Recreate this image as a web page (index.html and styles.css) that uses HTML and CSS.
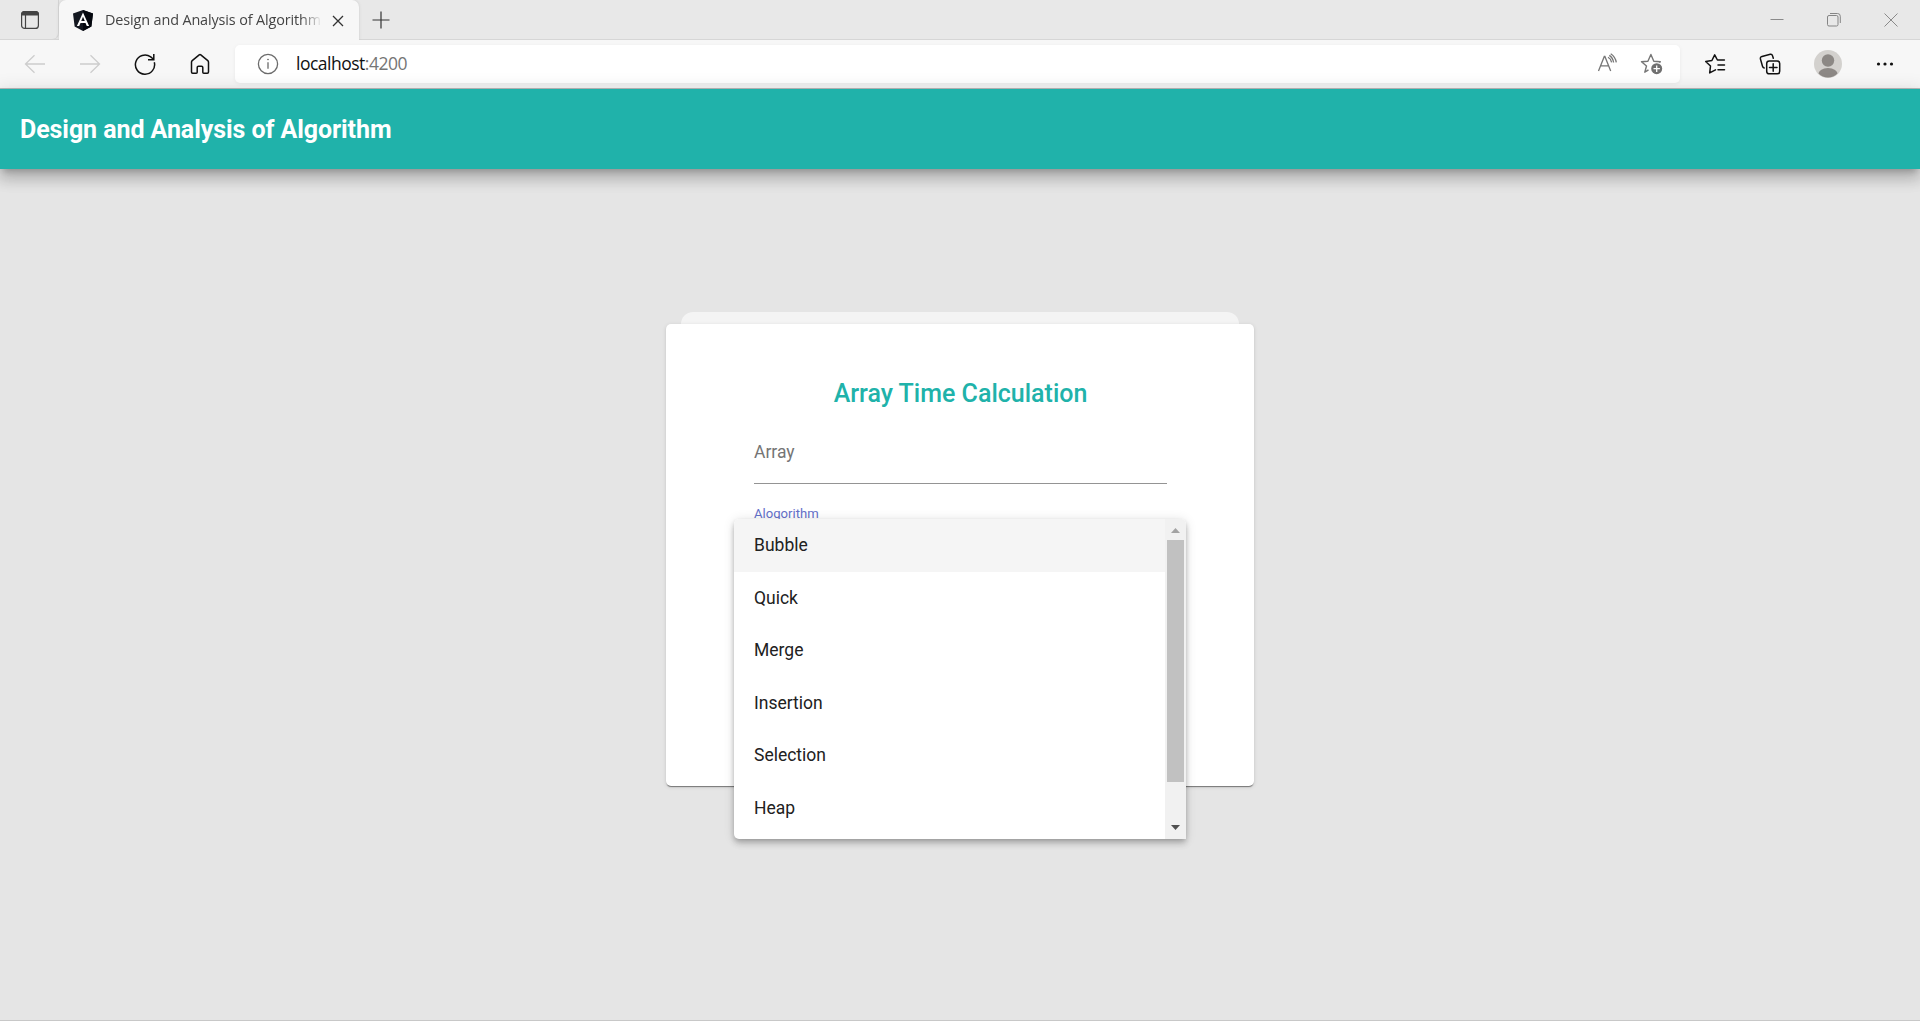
FILE: index.html
```html
<!DOCTYPE html>
<html lang="en">
<head>
<meta charset="utf-8">
<title>Design and Analysis of Algorithm</title>
<link rel="stylesheet" href="styles.css">
</head>
<body>
<div class="window">
  <div class="tab-strip">
    <div class="tab-actions">
      <svg width="20" height="20" viewBox="0 0 20 20" fill="none" stroke="#444"><rect x="1.6" y="1.6" width="16.8" height="16.8" rx="3" stroke-width="1.2"/><path d="M1.5 5V4a2.5 2.5 0 0 1 2.500-2.500h12a2.500 2.500 0 0 1 2.500 2.500v1z" fill="#444"/><path d="M5.500 5v13" stroke-width="1.200"/></svg>
    </div>
    <div class="tab">
      <svg class="favicon" width="20" height="21" viewBox="0 0 20 21"><path d="M10 0l10 3.400-1.600 13.200L10 21l-8.400-4.400L0 3.400z" fill="#141821"/><path d="M10 0l10 3.400-1.600 13.200L10 21z" fill="#05080f"/><path d="M10 2.400L3.900 16h2.300l1.300-3.100h5L13.800 16h2.300zm0 4.300l1.800 4.300H8.200z" fill="#fff"/></svg>
      <span class="tab-title">Design and Analysis of Algorithm</span>
      <svg class="tab-close" width="12" height="12" viewBox="0 0 12 12" stroke="#333" stroke-width="1.300"><path d="M1 1l10 10M11 1L1 11"/></svg>
    </div>
    <svg class="new-tab" width="18" height="18" viewBox="0 0 18 18" stroke="#333" stroke-width="1.200"><path d="M9 .5v17M.5 9h17"/></svg>
    <div class="window-buttons">
      <svg width="14" height="14" viewBox="0 0 14 14" stroke="#8a8a8a"><path d="M.5 6.500h13"/></svg>
      <svg width="14" height="14" viewBox="0 0 14 14" fill="none" stroke="#858585"><rect x=".5" y="2.500" width="10.500" height="10.500" rx="1.500"/><path d="M3 .5h7.500a2.800 2.800 0 0 1 2.800 2.800V10"/></svg>
      <svg width="14" height="14" viewBox="0 0 14 14" stroke="#8a8a8a"><path d="M.5 .5l13 13M13.500 .5l-13 13"/></svg>
    </div>
  </div>
  <div class="toolbar">
    <div class="nav">
      <svg width="22" height="22" viewBox="0 0 22 22" fill="none" stroke="#cdcdcd" stroke-width="1.300"><path d="M21 11H1.500M10.500 2.200L1.500 11l9 8.800"/></svg>
      <svg width="22" height="22" viewBox="0 0 22 22" fill="none" stroke="#cdcdcd" stroke-width="1.300"><path d="M1 11h19.500M11.500 2.200l9 8.800-9 8.800"/></svg>
      <svg width="22" height="22" viewBox="0 0 22 22" fill="none" stroke="#111" stroke-width="1.500"><path d="M20.300 9.200A9.600 9.600 0 1 1 16.700 3.900L19.500 6.300M19.800 1v5.800H14"/></svg>
      <svg width="22" height="22" viewBox="0 0 22 22" fill="none" stroke="#111" stroke-width="1.500" stroke-linejoin="round"><path d="M2.500 9.200q0-1 .7-1.600L10.200 1.900q.8-.6 1.600 0l7 5.700q.7.600.7 1.600V19q0 1.200-1.200 1.200h-3.500q-1 0-1-1V14.500q0-1.300-1.300-1.300h-3q-1.300 0-1.300 1.300v4.700q0 1-1 1H3.700q-1.200 0-1.200-1.200z"/></svg>
    </div>
    <div class="address">
      <svg class="info" width="22" height="22" viewBox="0 0 22 22" fill="none" stroke="#6b6b6b" stroke-width="1.300"><circle cx="11" cy="11" r="9.600"/><path d="M11 9.200v6.500"/><circle cx="11" cy="6.500" r=".5" fill="#6b6b6b" stroke-width=".8"/></svg>
      <span class="url">localhost<span class="port">:4200</span></span>
      <svg class="read-aloud" width="22" height="20" viewBox="0 0 22 20" fill="none" stroke="#767676" stroke-width="1.300"><path d="M1.500 18L7.300 3.500h.6L13.700 18M3.600 12.800h8M11 4.300q3 1.600 3.600 5M12.300 2.400q3.500 2.200 4.300 7.100M13.700 .7q4.600 3 5.600 8.600"/></svg>
      <svg width="24" height="22" viewBox="0 0 24 22" fill="none" stroke="#767676" stroke-width="1.400" stroke-linejoin="round"><path d="M8.500 16.900L4.800 19.200 6.500 13 1.500 8.800l6.400-.5L10.900 1.500l2.900 6.800 6.500.5-1 1"/><circle cx="16.700" cy="15.700" r="5.500" fill="#707070" stroke="none"/><path d="M16.700 12.500v6.400M13.500 15.700h6.400" stroke="#fff" stroke-width="1.300"/></svg>
    </div>
    <div class="browser-actions">
      <svg width="22" height="22" viewBox="0 0 22 22" fill="none" stroke="#111" stroke-width="1.500" stroke-linejoin="round" stroke-linecap="round"><path d="M11.500 16.800L5.700 19.900 6.500 13 1.700 8.500l6.200-1L10.700 1.800l2.700 5.200h7M14 12h6.500M14 16.700h6.500"/></svg>
      <svg width="22" height="22" viewBox="0 0 22 22" fill="none" stroke="#111" stroke-width="1.500" stroke-linecap="round"><rect x="7.700" y="8" width="13" height="12.800" rx="2.600"/><path d="M14.200 10.700v7.500M10.500 14.400h7.500M14.300 5.200l-.8-2.600Q13 1 11.300 1.300L3 3.400Q1.100 4 1.400 5.900L3.500 13.300q.4 1.500 1.700 1.700"/></svg>
      <svg class="avatar" width="28" height="28" viewBox="0 0 28 28"><defs><clipPath id="avatar-clip"><circle cx="14" cy="14" r="13.500"/></clipPath></defs><circle cx="14" cy="14" r="14" fill="#d3d1ce"/><g fill="#8c8885" clip-path="url(#avatar-clip)"><circle cx="14" cy="10.500" r="6.200"/><ellipse cx="14" cy="25" rx="10" ry="7"/></g></svg>
      <svg width="18" height="18" viewBox="0 0 18 18" fill="#111"><circle cx="2.500" cy="9" r="1.600"/><circle cx="9" cy="9" r="1.600"/><circle cx="15.500" cy="9" r="1.600"/></svg>
    </div>
  </div>
  <header class="app-bar">Design and Analysis of Algorithm</header>
  <main class="page">
    <div class="card-stack">
      <div class="card-back"></div>
      <section class="card">
        <h1 class="card-title">Array Time Calculation</h1>
        <div class="field">Array</div>
        <div class="select">
          <div class="select-label">Alogorithm</div>
          <div class="options">
            <ul class="option-list">
              <li class="option active">Bubble</li>
              <li class="option">Quick</li>
              <li class="option">Merge</li>
              <li class="option">Insertion</li>
              <li class="option">Selection</li>
              <li class="option">Heap</li>
            </ul>
            <div class="scrollbar">
              <svg width="9" height="5" viewBox="0 0 9 5"><path d="M0 5L4.500 0 9 5z" fill="#a3a3a3"/></svg>
              <div class="thumb"></div>
              <svg class="down" width="9" height="5" viewBox="0 0 9 5"><path d="M0 0h9L4.500 5z" fill="#505050"/></svg>
            </div>
          </div>
        </div>
      </section>
    </div>
  </main>
</div>
</body>
</html>
```
FILE: styles.css
```css
* { box-sizing: border-box; }
body { margin: 0; font-family: Roboto, sans-serif; }
svg { display: block; flex: none; }

.window {
  display: flex;
  flex-direction: column;
  height: 1021px;
  overflow: hidden;
  background: #e5e5e5;
  border-bottom: 1px solid #c8c8c8;
}

.tab-strip {
  display: flex;
  height: 40px;
  flex: none;
  background: #e8e8e8;
  box-shadow: inset 0 -1px 0 #d6d6d6;
}
.tab-actions {
  width: 59px;
  padding: 10px 0 0 20px;
  border-bottom: 1px solid #d6d6d6;
  border-right: 1px solid #d3d3d3;
  border-radius: 0 0 7px 0;
  background: #e8e8e8;
}
.tab {
  display: flex;
  align-items: center;
  width: 300px;
  padding: 0 15px 0 14px;
  background: #f7f7f7;
  border-radius: 7px 7px 0 0;
  box-shadow: 0 0 3px #c8c8c8;
  clip-path: inset(0 -3px 0 -3px);
}
.tab-title {
  flex: 1;
  margin: 0 10px 0 12px;
  overflow: hidden;
  white-space: nowrap;
  font: 14.4px/20px "Open Sans", sans-serif;
  letter-spacing: -0.12px;
  color: #444;
  mask-image: linear-gradient(to right, #000 90%, transparent 100%);
}
.tab-close { margin-top: 1px; }
.new-tab { margin: 11px 0 0 13px; }
.window-buttons {
  display: flex;
  gap: 43px;
  margin: 13px 22px 0 auto;
}

.toolbar {
  display: flex;
  align-items: center;
  height: 49px;
  flex: none;
  background: #f7f7f7;
  border-bottom: 1px solid #bababa;
}
.nav {
  display: flex;
  gap: 33px;
  width: 235px;
  padding-left: 24px;
}
.address {
  display: flex;
  align-items: center;
  width: 1445px;
  height: 38px;
  padding: 0 16px 0 22px;
  background: #fff;
  border-radius: 5px;
  box-shadow: 0 1px 4px rgba(0, 0, 0, .06);
}
.url {
  margin: -3px auto 0 7px;
  font: 17.5px/24px "Open Sans", sans-serif;
  letter-spacing: -0.5px;
  color: #111;
}
.info { margin-right: 10px; }
.port { color: #757575; }
.read-aloud { margin: -3px 21px 0 0; }
.browser-actions {
  display: flex;
  align-items: center;
  margin-left: 24px;
}
.browser-actions svg:nth-child(2) { margin-left: 33px; }
.browser-actions .avatar { margin-left: 33px; }
.browser-actions svg:last-child { margin-left: 34px; }

.app-bar {
  display: flex;
  align-items: center;
  height: 80px;
  flex: none;
  padding: 0 20px;
  background: #20b2aa;
  color: #fff;
  font-size: 25px;
  font-weight: 700;
  letter-spacing: -0.075px;
  box-shadow: 0 6px 6px -4px rgba(0, 0, 0, .2), 0 10px 13px 1px rgba(0, 0, 0, .14), 0 4px 18px 3px rgba(0, 0, 0, .12);
}

.page {
  display: flex;
  justify-content: center;
  padding-top: 143px;
}
.card-stack { width: 588px; }
.card-back {
  height: 12px;
  margin: 0 15px;
  background: #f4f4f4;
  border-radius: 12px 12px 0 0;
}
.card {
  height: 462px;
  padding: 53px 87px 0 88px;
  background: #fff;
  border-radius: 5px;
  box-shadow: 0 2px 1px -1px rgba(0, 0, 0, .35), 0 1px 1px rgba(0, 0, 0, .14), 0 1px 4px rgba(0, 0, 0, .12);
}
.card-title {
  margin: 0;
  text-align: center;
  font-size: 25px;
  line-height: 33px;
  font-weight: 500;
  color: #20b2aa;
}
.field {
  height: 74px;
  padding-top: 32px;
  border-bottom: 1px solid #949494;
  font-size: 17.5px;
  line-height: 20px;
  color: #757575;
}
.select { position: relative; padding-top: 22px; }
.select-label {
  font-size: 13.125px;
  line-height: 16px;
  color: #6470c9;
}
.options {
  position: absolute;
  top: 35px;
  left: -20px;
  display: flex;
  width: 452px;
  height: 320px;
  overflow: hidden;
  background: #fff;
  border-radius: 5px 5px 0 5px;
  box-shadow: 0 2px 5px -1px rgba(0, 0, 0, .2), 0 5px 6px rgba(0, 0, 0, .14), 0 1px 12px rgba(0, 0, 0, .12);
}
.option-list { flex: 1; margin: 0; padding: 0; list-style: none; }
.option {
  height: 52.6px;
  padding-left: 20px;
  line-height: 52.5px;
  font-size: 17.5px;
  color: #212121;
}
.active { background: #f5f5f5; }
.scrollbar {
  display: flex;
  flex-direction: column;
  align-items: center;
  width: 21px;
  padding: 9px 0;
  background: #f1f1f1;
}
.thumb { width: 17px; height: 242px; margin-top: 7px; background: #c1c1c1; }
.down { margin-top: auto; }
```
